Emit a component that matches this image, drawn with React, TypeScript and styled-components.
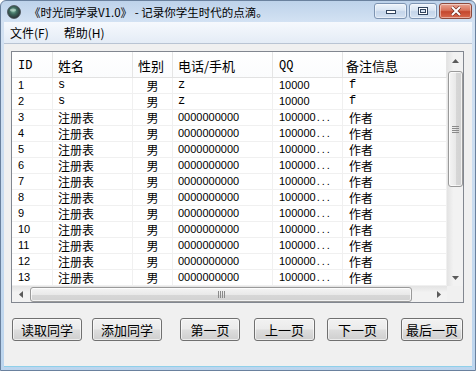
import React, { FC } from "react";
import styled, { createGlobalStyle, css } from "styled-components";

const CJK = `"Noto Sans CJK SC", "Liberation Sans", sans-serif`;
const SANS = `"Liberation Sans", "Noto Sans CJK SC", sans-serif`;
const MONO = `"Liberation Mono", "Noto Sans CJK SC", monospace`;

type TFont = "cjk" | "sans" | "mono";

const fontCss = (f: TFont) => {
  if (f === "mono") return css`font-family: ${MONO}; font-size: 12px;`;
  if (f === "sans") return css`font-family: ${SANS}; font-size: 11px;`;
  return css`font-family: ${CJK}; font-size: 12px;`;
};

interface IColumn {
  title: string;
  width: number;
  headPad: number;
  pad: number;
  headFont: TFont;
  center?: boolean;
}

const COLUMNS: IColumn[] = [
  { title: "ID", width: 41, headPad: 6, pad: 6, headFont: "mono" },
  { title: "姓名", width: 80, headPad: 5, pad: 5, headFont: "cjk" },
  { title: "性别", width: 40, headPad: 5, pad: 0, headFont: "cjk", center: true },
  { title: "电话/手机", width: 100, headPad: 5, pad: 5, headFont: "cjk" },
  { title: "QQ", width: 70, headPad: 6, pad: 6, headFont: "mono" },
  { title: "备注信息", width: 104, headPad: 3, pad: 6, headFont: "cjk" },
];

interface ICell {
  text: string;
  font: TFont;
  dots?: boolean;
}

const rows: ICell[][] = [1, 2, 3, 4, 5, 6, 7, 8, 9, 10, 11, 12, 13].map(n =>
  n <= 2
    ? [
        { text: String(n), font: "sans" as TFont },
        { text: "s", font: "mono" as TFont },
        { text: "男", font: "cjk" as TFont },
        { text: "z", font: "mono" as TFont },
        { text: "10000", font: "sans" as TFont },
        { text: "f", font: "mono" as TFont },
      ]
    : [
        { text: String(n), font: "sans" as TFont },
        { text: "注册表", font: "cjk" as TFont },
        { text: "男", font: "cjk" as TFont },
        { text: "0000000000", font: "sans" as TFont },
        { text: "100000", font: "sans" as TFont, dots: true },
        { text: "作者", font: "cjk" as TFont },
      ]
);

const BUTTONS = [
  { label: "读取同学", width: 70, gap: 1 },
  { label: "添加同学", width: 70, gap: 10 },
  { label: "第一页", width: 60, gap: 18 },
  { label: "上一页", width: 61, gap: 14 },
  { label: "下一页", width: 61, gap: 12 },
  { label: "最后一页", width: 62, gap: 13 },
];

const GlobalStyle = createGlobalStyle`
  html, body {
    margin: 0;
    padding: 0;
    background: #ffffff;
  }
  body {
    width: 476px;
    height: 371px;
    overflow: hidden;
  }
`;

const Window = styled.div`
  width: 476px;
  height: 371px;
  box-sizing: border-box;
  display: flex;
  flex-direction: column;
  border: 1px solid #6a819e;
  border-radius: 6px 6px 0 0;
  background: linear-gradient(#bdd2ea, #d3e2f3 21px, #c9dcf0 60%, #bcd5ee);
  overflow: hidden;
`;

const TitleBar = styled.div`
  height: 21px;
  flex-shrink: 0;
  display: flex;
  align-items: center;
  padding-left: 6px;
`;

const TitleText = styled.span`
  margin-left: 8px;
  font-family: ${CJK};
  font-size: 11.5px;
  color: #000000;
  white-space: nowrap;
`;

const Controls = styled.div`
  margin-left: auto;
  margin-right: 3px;
  align-self: flex-start;
  margin-top: 2px;
  display: flex;
  gap: 2px;
`;

const CtrlButton = styled.div<{ $w: number; $close?: boolean }>`
  width: ${p => p.$w}px;
  height: 16px;
  box-sizing: border-box;
  display: flex;
  align-items: center;
  justify-content: center;
  border: 1px solid ${p => (p.$close ? "#8d4a3d" : "#7d94b2")};
  border-radius: 3px;
  background: ${p =>
    p.$close
      ? "linear-gradient(#e8a493, #d8735b 45%, #c4472e 55%, #d86a4e)"
      : "linear-gradient(#eef4fb, #d9e5f3 45%, #c4d5ea 55%, #d4e2f2)"};
  box-shadow: inset 0 0 0 1px rgba(255, 255, 255, 0.45);
`;

const Client = styled.div`
  flex: 1;
  margin: 0 3px 3px 3px;
  display: flex;
  flex-direction: column;
  background: #f0f0f0;
  border-bottom: 1px solid #8fd0ea;
`;

const MenuBar = styled.div`
  height: 21px;
  flex-shrink: 0;
  display: flex;
  align-items: center;
  gap: 15px;
  padding-left: 6px;
  background: linear-gradient(#f6f9fd, #e4ecf6);
  border-bottom: 1px solid #b9c4d3;
`;

const MenuItem = styled.span`
  font-family: ${CJK};
  font-size: 12px;
  line-height: 16px;
  margin-top: 1px;
  color: #000000;
`;

const Content = styled.div`
  flex: 1;
  padding: 7px 8px 0 7px;
  display: flex;
  flex-direction: column;
`;

const ListView = styled.div`
  height: 252px;
  box-sizing: border-box;
  border: 1px solid #828790;
  background: #ffffff;
  display: flex;
  flex-direction: column;
`;

const ListTop = styled.div`
  height: 234px;
  display: flex;
`;

const ListArea = styled.div`
  width: 435px;
  display: flex;
  flex-direction: column;
  overflow: hidden;
`;

const HeaderRow = styled.div`
  height: 26px;
  box-sizing: border-box;
  display: flex;
  border-bottom: 1px solid #e2e2e2;
  background: linear-gradient(#ffffff, #fbfcfd);
`;

const HeaderCell = styled.div<{ $w: number; $pad: number; $font: TFont }>`
  width: ${p => p.$w}px;
  box-sizing: border-box;
  flex-shrink: 0;
  display: flex;
  align-items: center;
  padding: 3px 0 0 ${p => p.$pad}px;
  border-right: 1px solid #e5e5e5;
  color: #000000;
  line-height: 16px;
  ${p => fontCss(p.$font)}
  ${p => p.$font === "cjk" && css`font-size: 13px;`}
`;

const Row = styled.div`
  height: 16px;
  box-sizing: border-box;
  display: flex;
  border-bottom: 1px solid #f0f0f0;
`;

const Cell = styled.div<{ $w: number; $pad: number; $font: TFont; $center?: boolean }>`
  width: ${p => p.$w}px;
  box-sizing: border-box;
  flex-shrink: 0;
  display: flex;
  align-items: center;
  justify-content: ${p => (p.$center ? "center" : "flex-start")};
  padding-left: ${p => p.$pad}px;
  border-right: 1px solid #f0f0f0;
  color: #000000;
  white-space: nowrap;
  line-height: 15px;
  ${p => fontCss(p.$font)}
`;

const Dots = styled.span`
  letter-spacing: 2px;
  margin-left: 1px;
`;

const VScroll = styled.div`
  width: 16px;
  display: flex;
  flex-direction: column;
  background: linear-gradient(to right, #e3e3e3, #f2f2f2 40%, #f2f2f2);
`;

const HScrollRow = styled.div`
  height: 16px;
  display: flex;
`;

const HScroll = styled.div`
  width: 435px;
  display: flex;
  background: linear-gradient(#e3e3e3, #f2f2f2 40%, #f2f2f2);
`;

const Corner = styled.div`
  width: 16px;
  background: #f0f0f0;
`;

const ArrowBox = styled.div<{ $vertical?: boolean }>`
  ${p => (p.$vertical ? "height: 17px;" : "width: 17px;")}
  flex-shrink: 0;
  display: flex;
  align-items: center;
  justify-content: center;
`;

const Track = styled.div<{ $vertical?: boolean }>`
  flex: 1;
  display: flex;
  flex-direction: ${p => (p.$vertical ? "column" : "row")};
  padding: ${p => (p.$vertical ? "2px 0 0 0" : "0 0 0 1px")};
`;

const Thumb = styled.div<{ $vertical?: boolean; $size: number }>`
  ${p =>
    p.$vertical
      ? css`
          height: ${p.$size}px;
          width: 15px;
          margin-left: 1px;
          background: linear-gradient(to right, #f4f4f4, #e9e9e9 50%, #d7d7d7 52%, #d2d2d2);
        `
      : css`
          width: ${p.$size}px;
          height: 15px;
          margin-top: 1px;
          background: linear-gradient(#f4f4f4, #e9e9e9 50%, #d7d7d7 52%, #d2d2d2);
        `}
  box-sizing: border-box;
  border: 1px solid #9a9a9a;
  border-radius: 3px;
  box-shadow: inset 0 0 0 1px rgba(255, 255, 255, 0.7);
  display: flex;
  align-items: center;
  justify-content: center;
`;

const ButtonRow = styled.div`
  margin-top: 15px;
  display: flex;
`;

const PushButton = styled.div<{ $w: number; $gap: number }>`
  width: ${p => p.$w}px;
  margin-left: ${p => p.$gap}px;
  height: 23px;
  box-sizing: border-box;
  display: flex;
  align-items: center;
  justify-content: center;
  border: 1px solid #707070;
  border-radius: 3px;
  background: linear-gradient(#f2f2f2, #ebebeb 48%, #dddddd 52%, #cfcfcf);
  box-shadow: inset 0 0 0 1px rgba(255, 255, 255, 0.6);
  font-family: ${CJK};
  font-size: 13px;
  line-height: 18px;
  color: #000000;
`;

const AppIcon: FC = () => (
  <svg width="14" height="14" viewBox="0 0 14 14">
    <defs>
      <radialGradient id="ico" cx="0.45" cy="0.4" r="0.6">
        <stop offset="0" stopColor="#7fb9a0" />
        <stop offset="0.45" stopColor="#3f6a5e" />
        <stop offset="1" stopColor="#2a2f33" />
      </radialGradient>
    </defs>
    <circle cx="7" cy="7" r="6.5" fill="url(#ico)" stroke="#4a5258" strokeWidth="0.8" />
    <ellipse cx="6" cy="5" rx="3" ry="1.6" fill="#d8efe4" opacity="0.55" />
  </svg>
);

const Arrow: FC<{ dir: "up" | "down" | "left" | "right" }> = ({ dir }) => {
  const pts = {
    up: "0,4 3.5,0 7,4",
    down: "0,0 3.5,4 7,0",
    left: "4,0 0,3.5 4,7",
    right: "0,0 4,3.5 0,7",
  }[dir];
  const vertical = dir === "up" || dir === "down";
  return (
    <svg width={vertical ? 7 : 4} height={vertical ? 4 : 7}>
      <polygon points={pts} fill="#5a5a5a" />
    </svg>
  );
};

const Grip: FC<{ vertical?: boolean }> = ({ vertical }) =>
  vertical ? (
    <svg width="7" height="7">
      {[0, 2, 4, 6].map(y => (
        <rect key={y} x="0" y={y} width="7" height="1" fill="#8a8a8a" />
      ))}
    </svg>
  ) : (
    <svg width="7" height="7">
      {[0, 2, 4, 6].map(x => (
        <rect key={x} x={x} y="0" width="1" height="7" fill="#8a8a8a" />
      ))}
    </svg>
  );

const App: FC = () => (
  <>
    <GlobalStyle />
    <Window>
      <TitleBar>
        <AppIcon />
        <TitleText>《时光同学录V1.0》 - 记录你学生时代的点滴。</TitleText>
        <Controls>
          <CtrlButton $w={33}>
            <svg width="10" height="5">
              <rect x="0.5" y="1.5" width="9" height="3" fill="#ffffff" stroke="#33455e" />
            </svg>
          </CtrlButton>
          <CtrlButton $w={28}>
            <svg width="10" height="8">
              <rect x="0.5" y="0.5" width="9" height="7" fill="#ffffff" stroke="#33455e" />
              <rect x="2.5" y="2.5" width="5" height="3" fill="#d6e2f0" stroke="#33455e" />
            </svg>
          </CtrlButton>
          <CtrlButton $w={33} $close>
            <svg width="12" height="10" viewBox="0 0 12 10">
              <path d="M2 1 L10 9 M10 1 L2 9" stroke="#6d2a1e" strokeWidth="3.2" />
              <path d="M2 1 L10 9 M10 1 L2 9" stroke="#ffffff" strokeWidth="2" />
            </svg>
          </CtrlButton>
        </Controls>
      </TitleBar>
      <Client>
        <MenuBar>
          <MenuItem>文件(F)</MenuItem>
          <MenuItem>帮助(H)</MenuItem>
        </MenuBar>
        <Content>
          <ListView>
            <ListTop>
              <ListArea>
                <HeaderRow>
                  {COLUMNS.map(c => (
                    <HeaderCell key={c.title} $w={c.width} $pad={c.headPad} $font={c.headFont}>
                      {c.title}
                    </HeaderCell>
                  ))}
                </HeaderRow>
                {rows.map((r, i) => (
                  <Row key={i}>
                    {r.map((cell, j) => (
                      <Cell
                        key={j}
                        $w={COLUMNS[j].width}
                        $pad={COLUMNS[j].pad}
                        $font={cell.font}
                        $center={COLUMNS[j].center}
                      >
                        {cell.text}
                        {cell.dots && <Dots>...</Dots>}
                      </Cell>
                    ))}
                  </Row>
                ))}
              </ListArea>
              <VScroll>
                <ArrowBox $vertical>
                  <Arrow dir="up" />
                </ArrowBox>
                <Track $vertical>
                  <Thumb $vertical $size={116}>
                    <Grip vertical />
                  </Thumb>
                </Track>
                <ArrowBox $vertical>
                  <Arrow dir="down" />
                </ArrowBox>
              </VScroll>
            </ListTop>
            <HScrollRow>
              <HScroll>
                <ArrowBox>
                  <Arrow dir="left" />
                </ArrowBox>
                <Track>
                  <Thumb $size={382}>
                    <Grip />
                  </Thumb>
                </Track>
                <ArrowBox>
                  <Arrow dir="right" />
                </ArrowBox>
              </HScroll>
              <Corner />
            </HScrollRow>
          </ListView>
          <ButtonRow>
            {BUTTONS.map(b => (
              <PushButton key={b.label} $w={b.width} $gap={b.gap}>
                {b.label}
              </PushButton>
            ))}
          </ButtonRow>
        </Content>
      </Client>
    </Window>
  </>
);

export default App;
